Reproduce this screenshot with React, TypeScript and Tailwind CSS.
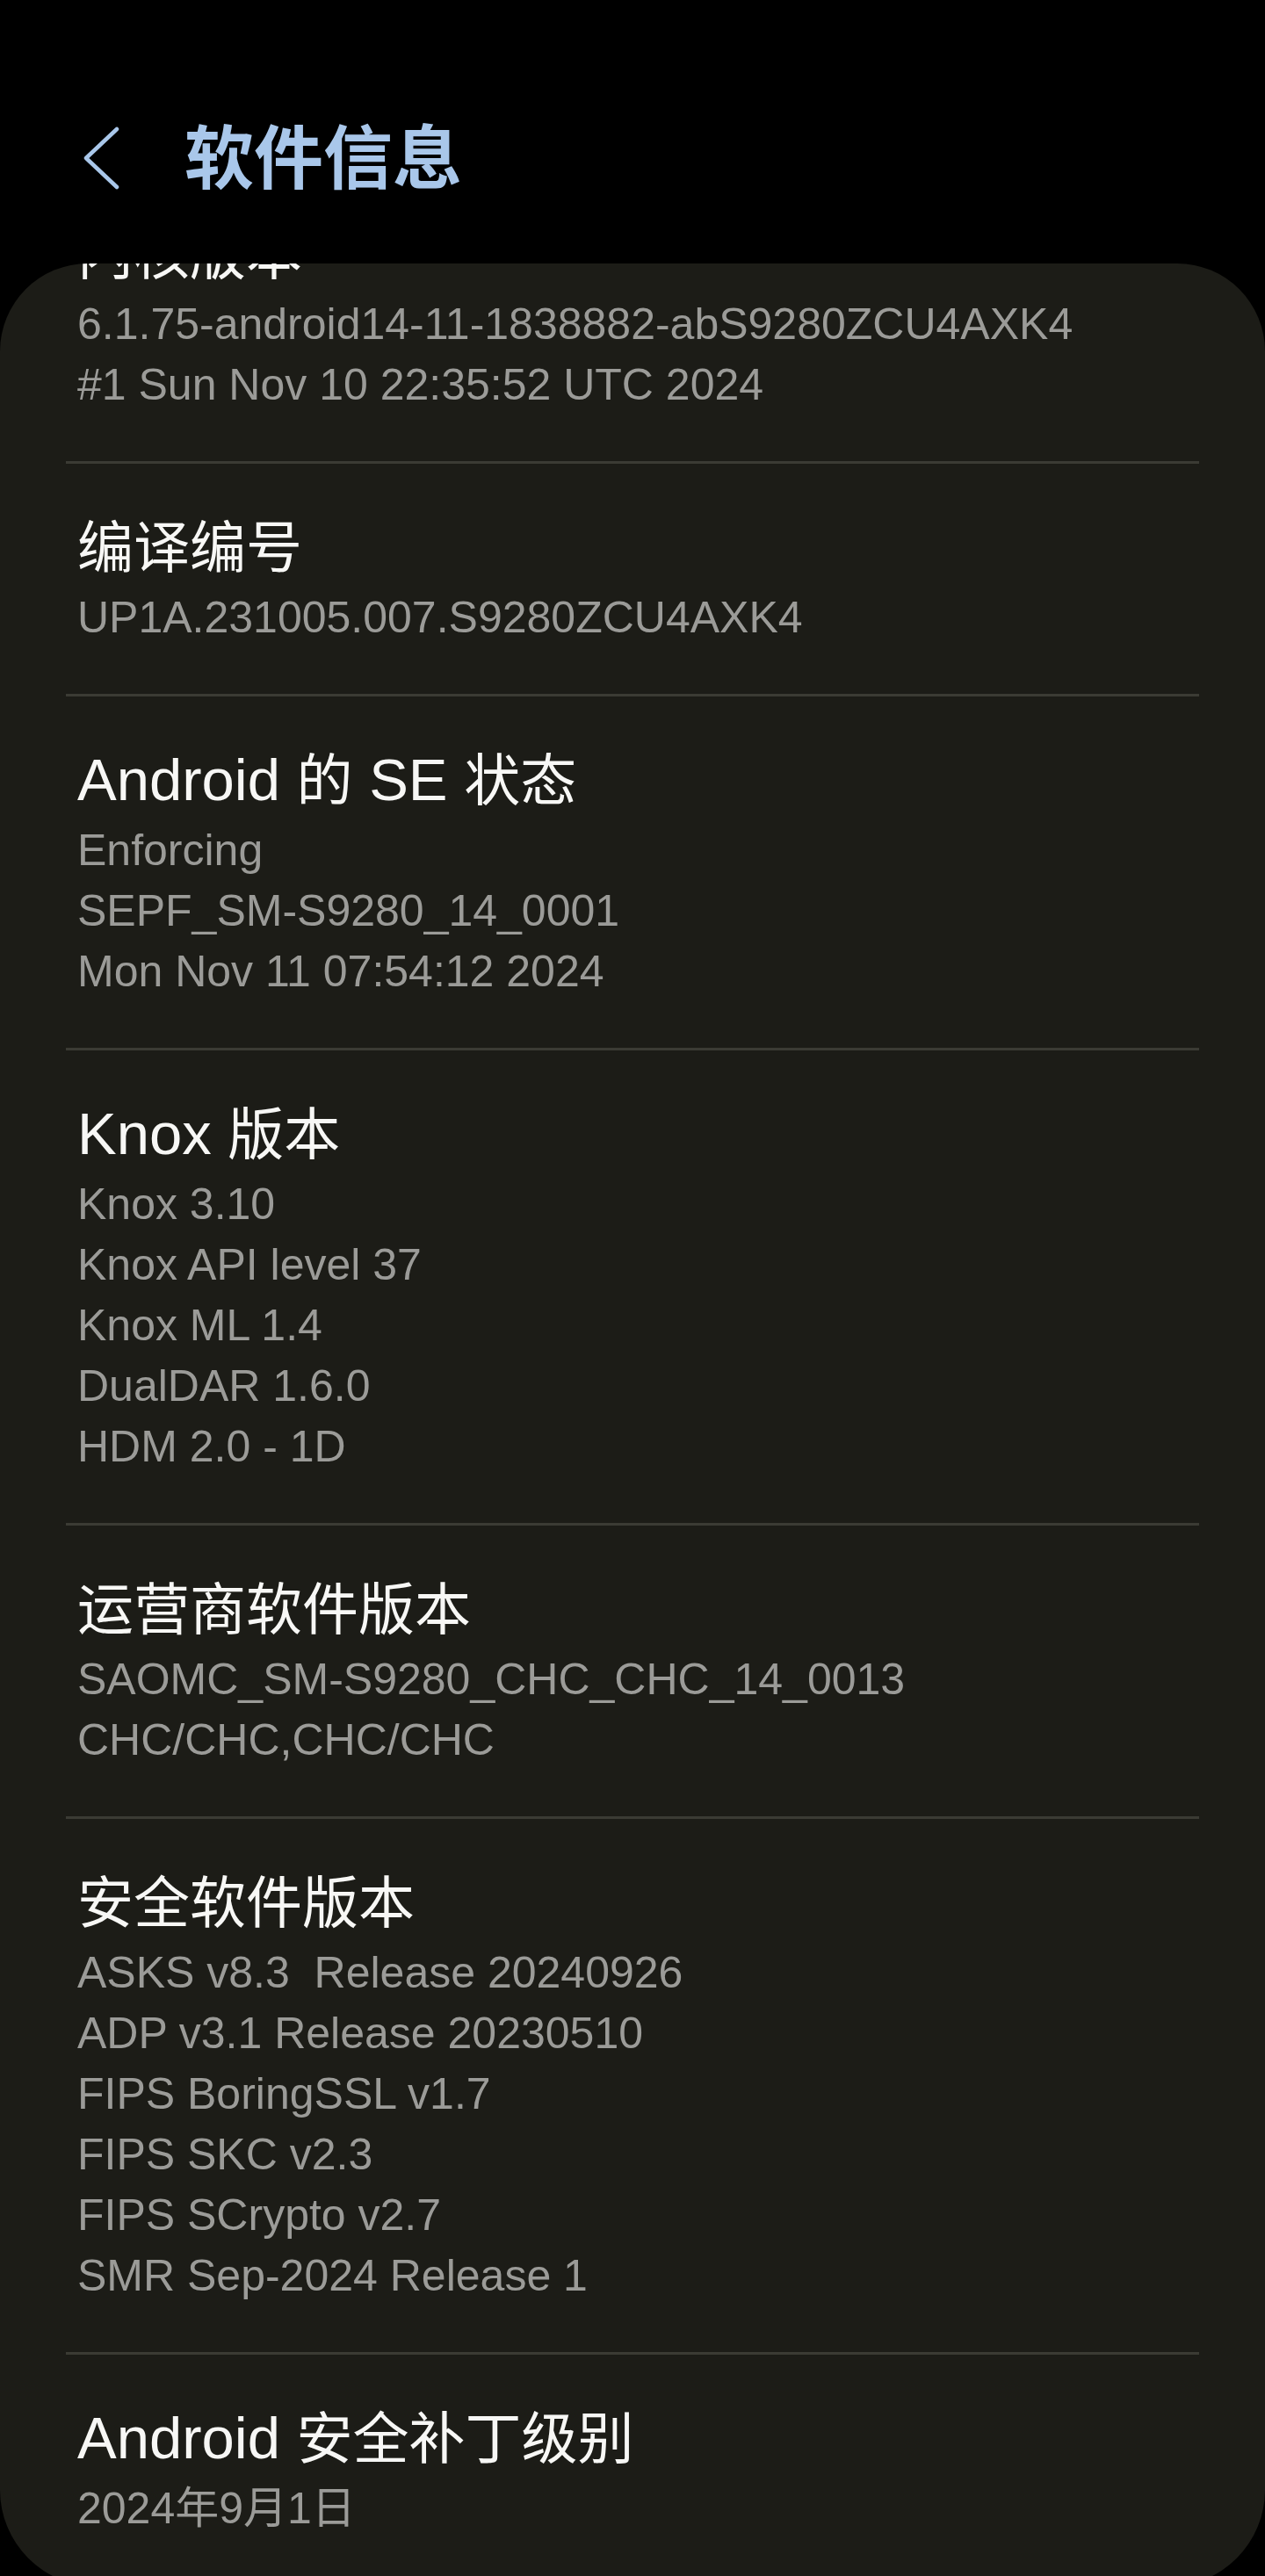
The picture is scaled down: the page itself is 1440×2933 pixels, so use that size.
import React from "react";

type Item = { title: string; lines: string[] };

const items: Item[] = [
  {
    title: "内核版本",
    lines: ["6.1.75-android14-11-1838882-abS9280ZCU4AXK4", "#1 Sun Nov 10 22:35:52 UTC 2024"],
  },
  { title: "编译编号", lines: ["UP1A.231005.007.S9280ZCU4AXK4"] },
  {
    title: "Android 的 SE 状态",
    lines: ["Enforcing", "SEPF_SM-S9280_14_0001", "Mon Nov 11 07:54:12 2024"],
  },
  {
    title: "Knox 版本",
    lines: ["Knox 3.10", "Knox API level 37", "Knox ML 1.4", "DualDAR 1.6.0", "HDM 2.0 - 1D"],
  },
  {
    title: "运营商软件版本",
    lines: ["SAOMC_SM-S9280_CHC_CHC_14_0013", "CHC/CHC,CHC/CHC"],
  },
  {
    title: "安全软件版本",
    lines: [
      "ASKS v8.3  Release 20240926",
      "ADP v3.1 Release 20230510",
      "FIPS BoringSSL v1.7",
      "FIPS SKC v2.3",
      "FIPS SCrypto v2.7",
      "SMR Sep-2024 Release 1",
    ],
  },
  { title: "Android 安全补丁级别", lines: ["2024年9月1日"] },
];

function Title({ text }: { text: string }) {
  const parts = text.split(/([\u4e00-\u9fff]+)/).filter((p) => p.length > 0);
  return (
    <div className="h-[80px] text-[65px] leading-[80px] text-[#f7f7f5] whitespace-pre">
      {parts.map((p, i) =>
        /[\u4e00-\u9fff]/.test(p) ? (
          <span key={i} className="text-[64px] leading-[60px]">
            {p}
          </span>
        ) : (
          <span key={i} className="text-[67px] leading-[60px]">
            {p}
          </span>
        )
      )}
    </div>
  );
}

function Row({ item }: { item: Item }) {
  return (
    <div className="pt-[56px] pb-[52px] pl-[88px] pr-[80px]">
      <Title text={item.title} />
      <div className="mt-[5px]">
        {item.lines.map((l, i) => (
          <div key={i} className="text-[50px] leading-[69px] text-[#9b9b98] whitespace-pre">
            {l}
          </div>
        ))}
      </div>
    </div>
  );
}

export default function App() {
  return (
    <div
      className="w-full h-[2933px] overflow-hidden bg-black"
      style={{ fontFamily: "'Liberation Sans', 'Noto Sans CJK SC', sans-serif" }}
    >
      <div className="h-[300px] pt-[125px] flex items-start">
        <svg
          className="ml-[94px] mt-[19px] shrink-0"
          width="44"
          height="72"
          viewBox="0 0 44 72"
          fill="none"
        >
          <polyline
            points="39,3 4,36 39,69"
            stroke="#a9c7ea"
            strokeWidth="4.5"
            strokeLinecap="round"
            strokeLinejoin="round"
          />
        </svg>
        <div
          className="ml-[72px] text-[79px] leading-[100px] font-bold text-[#a9c7ea]"
          style={{ fontFamily: "'Noto Sans CJK SC', sans-serif" }}
        >
          软件信息
        </div>
      </div>
      <div className="h-[2645px] bg-[#1c1c17] rounded-t-[100px] rounded-b-[110px] overflow-hidden">
        <div className="-mt-[106px]">
          {items.map((it, i) => (
            <div key={i}>
              {i > 0 && <div className="mx-[75px] h-[3px] bg-[#3b3b34]" />}
              <Row item={it} />
            </div>
          ))}
        </div>
      </div>
    </div>
  );
}
